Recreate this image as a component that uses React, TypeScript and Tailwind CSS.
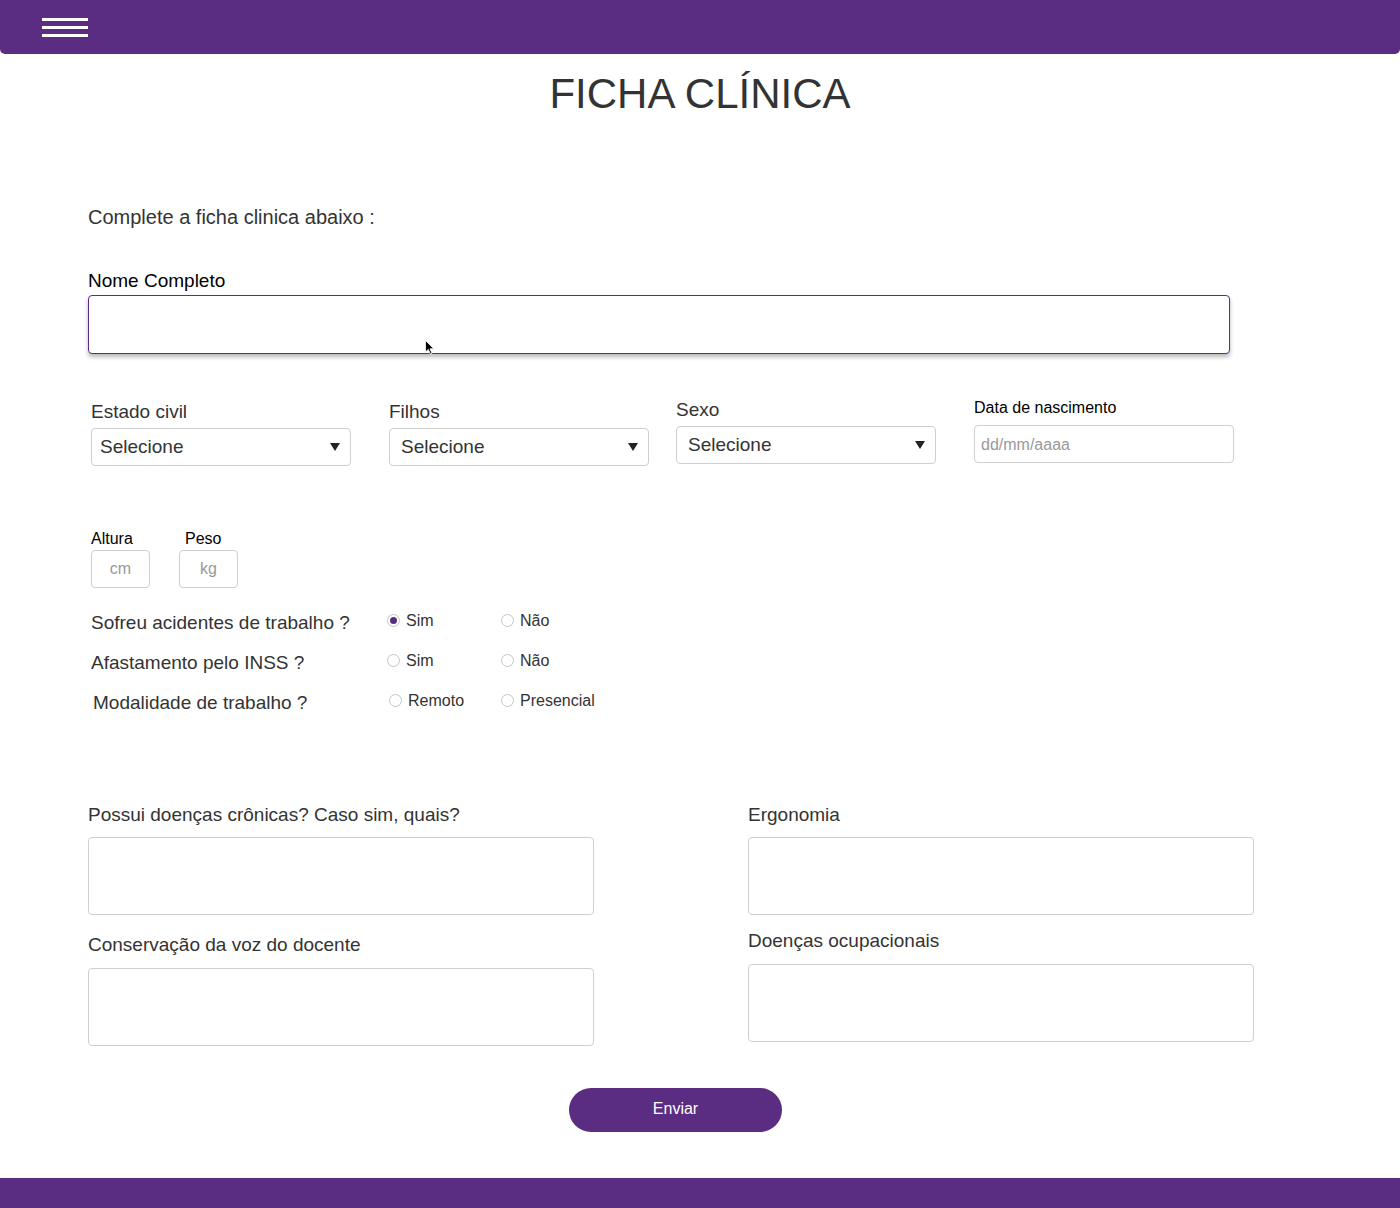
import React from "react";

const font = { fontFamily: '"Liberation Sans", Arial, Helvetica, sans-serif' };

function Select({ label, labelTop, selTop, pad }: { label: string; labelTop: string; selTop: string; pad: string }) {
  return (
    <div className={`flex flex-col ${labelTop}`}>
      <div className="text-[19px] leading-[22px] text-[#333]">{label}</div>
      <div className={`${selTop} ${pad} w-[260px] h-[38px] border border-[#cfcfcf] rounded-[4px] flex items-center justify-between pr-[10px] bg-white`}>
        <span className="text-[19px] leading-[22px] text-[#333]">Selecione</span>
        <svg width="10" height="8" viewBox="0 0 10 8">
          <path d="M0 0 L10 0 L5 8 Z" fill="#222" />
        </svg>
      </div>
    </div>
  );
}

function Radio({ checked, label, width }: { checked?: boolean; label: string; width: string }) {
  return (
    <div className={`flex items-center ${width}`}>
      <div className="w-[13px] h-[13px] rounded-full border border-[#c4c4c4] bg-white flex items-center justify-center mt-[-4px]">
        {checked && <div className="w-[7px] h-[7px] rounded-full bg-[#5b2d82]" />}
      </div>
      <span className="ml-[6px] mt-[-2px] text-[16px] leading-[18px] text-[#333]">{label}</span>
    </div>
  );
}

function Area({ label, labelMt, areaMt }: { label: string; labelMt: string; areaMt: string }) {
  return (
    <div className={`flex flex-col ${labelMt}`}>
      <div className="text-[19px] leading-[22px] text-[#333]">{label}</div>
      <div className={`${areaMt} w-[506px] h-[78px] border border-[#cfcfcf] rounded-[4px] bg-white`} />
    </div>
  );
}

export default function App() {
  return (
    <div className="w-[1400px] min-h-[1208px] bg-white flex flex-col" style={font}>
      <header className="h-[54px] bg-[#5b2d82] rounded-b-[5px] pl-[42px] pt-[18px] flex flex-col gap-[5px]">
        <div className="w-[46px] h-[3px] bg-white" />
        <div className="w-[46px] h-[3px] bg-white" />
        <div className="w-[46px] h-[3px] bg-white" />
      </header>

      <h1 className="mt-[16px] text-center text-[42px] leading-[48px] text-[#333]">FICHA CLÍNICA</h1>

      <div className="pl-[88px] flex flex-col">
        <p className="mt-[88px] text-[20px] leading-[23px] text-[#333]">Complete a ficha clinica abaixo :</p>

        <div className="mt-[41px] text-[19px] leading-[22px] text-black">Nome Completo</div>
        <div className="relative mt-[3px] w-[1142px] h-[59px] border border-[#5b2d82] rounded-[4px] shadow-[0_3px_4px_rgba(0,0,0,0.28)] bg-white">
          <svg className="absolute left-[336px] top-[44px]" width="10" height="15" viewBox="0 0 10 15">
            <path d="M0.5 0.5 L0.5 12 L3.3 9.4 L5.4 14 L7 13.3 L5 8.8 L8.8 8.8 Z" fill="#000" stroke="#fff" strokeWidth="0.8" />
          </svg>
        </div>

        <div className="mt-[44px] flex items-start">
          <div className="ml-[3px]">
            <Select label="Estado civil" labelTop="mt-[3px]" selTop="mt-[5px]" pad="pl-[8px]" />
          </div>
          <div className="ml-[38px]">
            <Select label="Filhos" labelTop="mt-[3px]" selTop="mt-[5px]" pad="pl-[11px]" />
          </div>
          <div className="ml-[27px]">
            <Select label="Sexo" labelTop="mt-[1px]" selTop="mt-[5px]" pad="pl-[11px]" />
          </div>
          <div className="ml-[38px] flex flex-col">
            <div className="mt-[1px] text-[16px] leading-[18px] text-black">Data de nascimento</div>
            <div className="mt-[8px] w-[260px] h-[38px] border border-[#cfcfcf] rounded-[4px] flex items-center pl-[6px] pt-[2px] bg-white">
              <span className="text-[16px] leading-[18px] text-[#999]">dd/mm/aaaa</span>
            </div>
          </div>
        </div>

        <div className="mt-[64px] ml-[3px] flex items-start">
          <div className="flex flex-col">
            <div className="text-[16px] leading-[18px] text-black">Altura</div>
            <div className="mt-[2px] w-[59px] h-[38px] border border-[#cfcfcf] rounded-[4px] flex items-center justify-center">
              <span className="text-[16px] leading-[18px] text-[#999]">cm</span>
            </div>
          </div>
          <div className="ml-[29px] flex flex-col">
            <div className="ml-[6px] text-[16px] leading-[18px] text-black">Peso</div>
            <div className="mt-[2px] w-[59px] h-[38px] border border-[#cfcfcf] rounded-[4px] flex items-center justify-center">
              <span className="text-[16px] leading-[18px] text-[#999]">kg</span>
            </div>
          </div>
        </div>

        <div className="mt-[14px] flex flex-col">
          <div className="h-[40px] flex items-center pl-[3px]">
            <div className="w-[296px] mt-[2px] text-[19px] leading-[22px] text-[#333]">Sofreu acidentes de trabalho ?</div>
            <Radio checked label="Sim" width="w-[114px]" />
            <Radio label="Não" width="w-[100px]" />
          </div>
          <div className="h-[40px] flex items-center pl-[3px]">
            <div className="w-[296px] mt-[2px] text-[19px] leading-[22px] text-[#333]">Afastamento pelo INSS ?</div>
            <Radio label="Sim" width="w-[114px]" />
            <Radio label="Não" width="w-[100px]" />
          </div>
          <div className="h-[40px] flex items-center pl-[5px]">
            <div className="w-[296px] mt-[2px] text-[19px] leading-[22px] text-[#333]">Modalidade de trabalho ?</div>
            <Radio label="Remoto" width="w-[112px]" />
            <Radio label="Presencial" width="w-[120px]" />
          </div>
        </div>

        <div className="mt-[82px] flex items-start">
          <div className="flex flex-col">
            <Area label="Possui doenças crônicas? Caso sim, quais?" labelMt="mt-0" areaMt="mt-[11px]" />
            <Area label="Conservação da voz do docente" labelMt="mt-[19px]" areaMt="mt-[12px]" />
          </div>
          <div className="ml-[154px] flex flex-col">
            <Area label="Ergonomia" labelMt="mt-0" areaMt="mt-[11px]" />
            <Area label="Doenças ocupacionais" labelMt="mt-[15px]" areaMt="mt-[12px]" />
          </div>
        </div>

        <button className="mt-[42px] ml-[481px] w-[213px] h-[44px] rounded-full bg-[#5b2d82] text-white text-[16px] leading-[18px] pb-[2px]">
          Enviar
        </button>
      </div>

      <footer className="mt-auto h-[30px] bg-[#5b2d82]" />
    </div>
  );
}
